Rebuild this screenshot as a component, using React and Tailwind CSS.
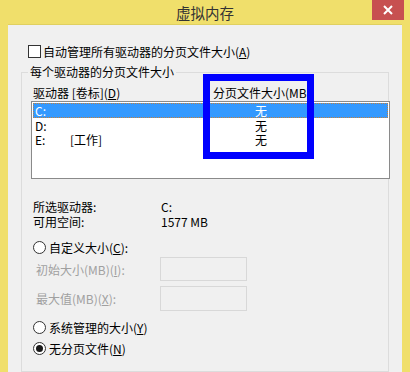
import React from 'react';

const font = { fontFamily: '"Microsoft YaHei", "Noto Sans CJK SC", "Noto Sans", sans-serif' };

function Radio({ checked, label, className = '' }) {
    return (
        <div className={`flex items-center h-[15px] ${className}`}>
            <span className="w-[13px] h-[13px] rounded-full border border-[#333] bg-white flex items-center justify-center">
                {checked && <span className="w-[7px] h-[7px] rounded-full bg-[#1a1a1a]"></span>}
            </span>
            <span className="ml-[3px]">{label}</span>
        </div>
    );
}

function Row({ drive, label, selected }) {
    return (
        <div className={`flex items-center leading-[13px] ${selected ? 'h-[15px] bg-[#3399ff] text-white outline outline-1 outline-dotted outline-[#c08040] -outline-offset-1' : 'h-[14px]'}`}>
            <span className="w-[37px] pl-[2px]">{drive}</span>
            <span className="w-[185px]">{label}</span>
            <span>无</span>
        </div>
    );
}

export default function App() {
    return (
        <div className="w-[410px] h-[372px] bg-[#f0df6b] relative overflow-hidden text-[12px] text-black leading-[15px]" style={font}>
            {/* title bar */}
            <div className="h-[24px] flex items-center justify-center text-[14.5px] text-[#333]">
                虚拟内存
            </div>
            <div className="absolute top-0 left-[372px] w-[32px] h-[20px] bg-[#c75050] flex items-center justify-center">
                <svg width="10" height="10" viewBox="0 0 10 10">
                    <path d="M1 1 L9 9 M9 1 L1 9" stroke="white" strokeWidth="2" />
                </svg>
            </div>

            {/* client area */}
            <div className="ml-[8px] w-[394px] h-[348px] bg-[#f0f0f0] pt-[20px] border-t border-[#e0d060]">
                <div className="flex items-center ml-[20px] h-[13px]">
                    <span className="w-[13px] h-[13px] border border-[#333] bg-white"></span>
                    <span className="ml-[2px]">自动管理所有驱动器的分页文件大小(<u>A</u>)</span>
                </div>

                <div className="mt-[14px] ml-[13px] w-[368px] h-[300px] border border-[#dcdcdc] relative">
                    <span className="absolute -top-[9px] left-[6px] px-[2px] bg-[#f0f0f0]">每个驱动器的分页文件大小</span>

                    <div className="flex pt-[10px] h-[28px] items-center">
                        <span className="ml-[11px] w-[180px]">驱动器 [卷标](<u>D</u>)</span>
                        <span className="w-[94px] overflow-hidden whitespace-nowrap">分页文件大小(MB)</span>
                    </div>

                    <div className="ml-[9px] w-[359px] h-[78px] bg-white border border-[#8a8a8a] p-px">
                        <Row drive="C:" label="" selected />
                        <Row drive="D:" label="" />
                        <Row drive="E:" label="[工作]" />
                    </div>

                    <div className="mt-[20px] ml-[11px] flex">
                        <span className="w-[128px]">所选驱动器:</span>
                        <span>C:</span>
                    </div>
                    <div className="ml-[11px] flex">
                        <span className="w-[128px]">可用空间:</span>
                        <span>1577 MB</span>
                    </div>

                    <Radio label={<>自定义大小(<u>C</u>):</>} className="mt-[11px] ml-[11px]" />

                    <div className="mt-[2px] ml-[14px] flex items-center text-[#a0a0a0] h-[24px]">
                        <span className="w-[124px]">初始大小(MB)(<u>I</u>):</span>
                        <span className="w-[87px] h-[24px] border border-[#d8d8d8] bg-[#f0f0f0]"></span>
                    </div>
                    <div className="mt-[5px] ml-[14px] flex items-center text-[#a0a0a0] h-[25px]">
                        <span className="w-[124px]">最大值(MB)(<u>X</u>):</span>
                        <span className="w-[87px] h-[25px] border border-[#d8d8d8] bg-[#f0f0f0]"></span>
                    </div>

                    <Radio label={<>系统管理的大小(<u>Y</u>)</>} className="mt-[9px] ml-[11px]" />
                    <Radio checked label={<>无分页文件(<u>N</u>)</>} className="mt-[6px] ml-[11px]" />
                </div>
            </div>

            {/* annotation box */}
            <div className="absolute left-[203px] top-[74px] w-[111px] h-[85px] border-[7px] border-[#0000ff]"></div>
        </div>
    );
}
